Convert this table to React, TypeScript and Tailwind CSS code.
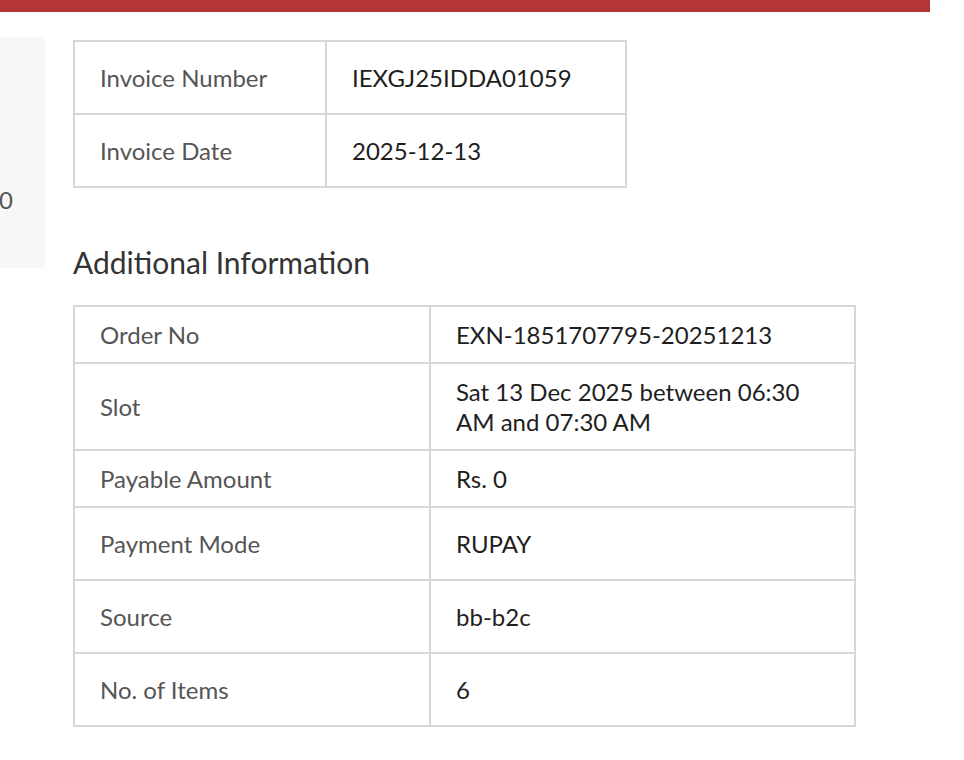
export default function App() {
  const rows1 = [
    { label: "Invoice Number", value: "IEXGJ25IDDA01059", h: "h-[71px]" },
    { label: "Invoice Date", value: "2025-12-13", h: "h-[73px]" },
  ];
  const rows2 = [
    { label: "Order No", value: "EXN-1851707795-20251213", h: "h-[55px]" },
    { label: "Slot", value: "Sat 13 Dec 2025 between 06:30 AM and 07:30 AM", h: "h-[87px]" },
    { label: "Payable Amount", value: "Rs. 0", h: "h-[57px]" },
    { label: "Payment Mode", value: "RUPAY", h: "h-[73px]" },
    { label: "Source", value: "bb-b2c", h: "h-[73px]" },
    { label: "No. of Items", value: "6", h: "h-[73px]" },
  ];
  return (
    <div className="w-[964px] h-[760px] bg-white overflow-hidden font-['Lato',sans-serif]">
      <div className="h-[12px] w-[930px] bg-[#b43535]" />
      <div className="flex">
        <div className="mt-[25px] h-[231px] w-[45px] bg-[#f7f7f7] pt-[151px] text-[24px] leading-none text-[#555]">
          <span className="-ml-[1px] block">0</span>
        </div>
        <div className="ml-[28px] pt-[28px]">
          <div className="w-[554px] border-2 border-[#d7d7d7]">
            {rows1.map((r, i) => (
              <div key={r.label} className={`flex ${r.h} ${i > 0 ? "border-t-2 border-[#d7d7d7]" : ""}`}>
                <div className="w-[250px] flex items-center pl-[25px] text-[24px] text-[#555]">{r.label}</div>
                <div className="flex-1 flex items-center pl-[25px] border-l-2 border-[#d7d7d7] text-[24px] text-[#1e1e1e]">{r.value}</div>
              </div>
            ))}
          </div>
          <div className="mt-[59px] text-[30px] leading-none text-[#333]">Additional Information</div>
          <div className="mt-[28px] w-[783px] border-2 border-[#d7d7d7]">
            {rows2.map((r, i) => (
              <div key={r.label} className={`flex ${r.h} ${i > 0 ? "border-t-2 border-[#d7d7d7]" : ""}`}>
                <div className="w-[354px] flex items-center pl-[25px] pt-[1px] text-[24px] text-[#555]">{r.label}</div>
                <div className="flex-1 flex items-center pl-[25px] pr-[24px] pt-[1px] border-l-2 border-[#d7d7d7] text-[24px] leading-[30px] text-[#1e1e1e]">{r.value}</div>
              </div>
            ))}
          </div>
        </div>
      </div>
    </div>
  );
}
